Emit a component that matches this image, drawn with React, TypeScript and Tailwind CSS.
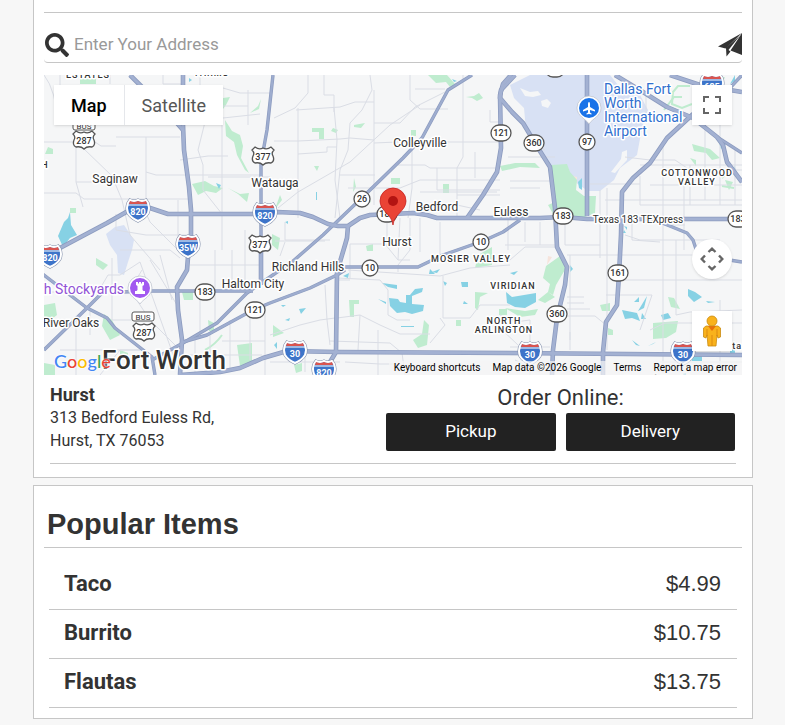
import type { ReactNode } from "react";
import { FaSearch } from "react-icons/fa";

const popularItems = [
  { name: "Taco", price: "$4.99" },
  { name: "Burrito", price: "$10.75" },
  { name: "Flautas", price: "$13.75" }
];

const highways = [
  "M44 256 L60 248 L107 223 L128 211 L140 207 L150 208 L168 214 L253 214 L277 212 L300 213 L313 217 L328 224 L338 226 L348 226 L360 218 L370 215 L413 213 L427 215 L437 218 L540 218 L563 217 L587 219 L742 219",
  "M183 75 L183 125 L184 150 L189 187 L191 210 L191 237 L188 257 L187 270 L177 287 L178 310 L182 340 L180 375",
  "M130 75 L140 85 L176 122 L183 130",
  "M587 75 V216",
  "M511 75 L503 84 L500 95 L501 148 L497 172 L483 195 L467 218",
  "M515 75 L501 90 L500 98 L512 112 L523 123 L538 148 L550 167 L555 208 L557 247 L567 267 L565 285 L557 318 L553 350 L552 375",
  "M702 108 L692 115 L667 138 L650 163 L633 178 L622 192 L621 235 L619 275 L617 305 L606 322 L603 352 L603 375",
  "M615 75 L643 92 L667 107 L693 118 L717 137 L723 145 L727 162 L742 182",
  "M348 226 L347 238 L345 245 L337 272 L336 352 L330 362 L322 375",
  "M180 375 L220 372 L240 368 L263 358 L287 351 L337 352 L510 353 L742 355",
  "M261 247 L261 285",
  "M670 75 L700 85 L730 90 L742 92"
];

const arterials = [
  "M273 75 L267 130 L261 163 L261 250",
  "M472 75 L448 90 L422 138 L403 158 L370 190 L323 235 L292 262 L280 270 L247 293 L217 323 L183 343 L152 360",
  "M345 270 L337 275 L310 288 L270 303 L253 310 L207 335 L183 342",
  "M340 267 H418 L443 255 L483 241 L503 232 L520 220",
  "M660 222 L687 233 L693 240 L698 255 L717 258 L742 262",
  "M717 137 L742 153",
  "M728 90 L742 75",
  "M122 292 L150 291 L253 291",
  "M40 272 L87 308 L107 318 L115 328 L152 357 L155 375",
  "M102 293 L87 308 L44 350"
];

const streets = [
  "M44 142 H78 M76 115 V182 L83 207 M83 148 L112 176 L122 200 L130 235 L160 270 M76 182 H120 M44 193 H76 L84 199 H190 M116 137 H180 M92 140 L101 146 H116 M146 137 V200 M146 172 L156 175 H261",
  "M180 160 L208 156 H228 M205 122 L198 150 L203 165 V190 L222 214 M222 125 V250 M208 177 H270 M178 200 V250 M116 214 V230 L146 235 H190 M140 200 L150 222 L178 250 M120 250 H170 L180 258",
  "M44 75 Q56 90 58 125 M60 85 V75 M110 75 V84 M163 75 V84 H183 M223 106 H248 M223 88 L240 93 H270 M248 90 V125 M223 118 L260 114 M200 75 V86",
  "M274 118 L295 108 L308 93 V75 M324 75 V95 H334 V112 M296 110 L340 107 L355 102 H374 M298 108 V218 M334 108 L337 140 L335 180 L340 218 M274 141 H298 L340 139 L350 138 L374 140 M298 154 L327 152 V147 L337 147",
  "M370 75 L372 90 L362 110 L350 123 L348 150 L340 170 L335 218 M374 90 V205 M374 123 H400 L415 107 L445 92 M374 143 L397 142 H500 M410 75 V100 L420 109 H448 M415 89 H445 M463 75 V157 L457 168 V218",
  "M278 208 L298 192 L350 162 L390 125 L420 105 M340 175 H375 M348 188 H400 L420 180 H500 M412 150 V188 L408 218 M398 165 L425 165 L430 168 H497 M437 168 V190 H500 M475 152 V178 M490 110 V122 H500 M457 195 H500",
  "M420 192 H497 M387 188 V245 M400 218 L398 260 M420 218 V252 M440 222 V255 M457 205 L480 210 M285 222 V240 H330 M275 241 H325 M285 242 L280 256 M350 244 V278 M350 244 H385 L398 260 H410",
  "M337 278 L380 280 L388 290 V315 L397 320 H410 M410 218 V250 L398 265 V272 M348 270 L440 276 L470 268 L510 265 M443 276 V318 H470 L480 305 H510 M430 343 L445 325 L440 318 M337 318 L360 315 L380 325 L400 334 H430",
  "M270 335 L300 325 L320 320 L335 318 M325 285 L327 320 L330 345 M330 341 L390 343 L402 353 L405 375 M360 315 L358 350 M378 330 V375 M337 300 V280 H350 M270 362 H340 M305 355 V372 M345 362 L380 364 H395",
  "M510 181 H550 M510 188 H540 M508 157 H555 M525 122 L530 140 L545 150 M508 220 V250 M525 222 V242 M540 222 V245 M505 245 H558 M500 258 L510 260 L525 247 H558 M565 225 V245 H600 M570 255 V340",
  "M590 184 H640 M607 188 V350 M640 176 V205 H742 M646 90 V120 M663 146 V375 M684 175 V250 M605 200 H640 L742 200 M640 165 H742 M650 185 H742 M625 157 L650 160 H675 L690 170 H742 M690 165 V205 M705 120 V200 M720 120 V205 M735 150 V205",
  "M567 255 H720 M600 190 V258 M620 280 H742 M625 235 L640 240 H720 M632 222 V240 L660 242 M606 295 H652 L640 330 M650 330 L665 323 H742 M663 225 H685 M676 240 V315 L690 312 L742 310 M660 362 H742 M700 325 V350 M720 300 V375",
  "M567 297 H584 M567 303 H584 M567 309 H590 M567 316 H595 L606 325 M570 332 V350 M530 320 V375 M500 315 L515 322 L530 320 M500 328 L518 345 M510 347 H550 M515 360 L540 372",
  "M44 292 H98 L108 275 H120 L140 262 M112 258 V320 H142 M140 262 L175 360 M150 260 L180 310 M160 255 L172 300 M44 322 H60 M60 350 H142 M76 320 V375 M90 310 V335 M142 270 L130 290 L150 320 L175 345",
  "M190 265 H261 M215 250 V291 M232 250 V291 M245 230 V291 M200 291 V335 M215 291 V325 M230 320 V372 M222 341 H265 M185 355 H262 M250 310 V360 M265 305 V375 M195 340 V375 M210 335 V375 M100 375 L120 350 L140 350"
];

const parks = [
  "M225 120 L232 131 L240 135 L243 146 L241 158 L249 173 L245 170 L237 155 L234 142 L226 136Z",
  "M192 184 L205 181 L214 186 L223 188 L216 193 L206 191 L198 195Z",
  "M228 188 L240 194 L249 193 L247 202 L238 194Z",
  "M70 208 h6 v5 h-6z M48 147 l5 2 v5 h-8z M80 79 h16 v5 h-16z",
  "M223 98 L230 97 L226 105 L223 109Z M261 99 L259 109 L250 113 L258 106Z",
  "M312 128 H324 V139 H319 V132 H312Z M333 128 L338 130 L336 133 L331 131Z M354 125 L365 123 L361 128 L354 127Z",
  "M428 75 H447 L455 84 L450 87 L446 82 L436 83Z M466 97 L474 96 L479 93 L483 98 L477 101 L472 98Z M411 130 h5 v6 h-5z M391 178 h9 v6 h-9z M443 184 h6 v9 h-6z M314 166 h5 l-2 5z",
  "M354 178 L356 187 L353 192Z M280 195 L282 200 L275 209Z M367 197 l4 6 l-2 -7z",
  "M551 165 L567 164 L570 172 L577 180 L576 190 L584 196 H596 L595 213 L580 219 H556 L548 205 L555 202Z",
  "M500 166 L515 163 H535 L540 168 L520 167 L502 171Z",
  "M546 266 L560 256 L566 268 L556 285 L553 295 L548 292 L550 284 L543 278Z M538 300 L548 292 L555 297 L545 303Z",
  "M505 308 L525 311 L538 309 L535 315 L520 317Z M600 305 l10 -2 v8 h-8z M608 328 l5 2 v5 h-5z",
  "M653 323 L678 321 L676 332 L666 338 L653 339Z M668 297 L674 298 L680 309 L671 307Z",
  "M424 320 L429 325 L427 345 L418 348 L413 340 L422 334Z M349 300 H359 V304 H354 V317 H350Z M366 246 l7 -2 v7 h-6z",
  "M475 292 L488 293 L480 297 L478 310 L475 308Z M478 255 L492 247 V265 L475 268Z M456 320 h5 v6 h-5z M499 309 h8 v6 h-8z",
  "M44 305 L55 303 L57 315 L48 322 L44 320Z M96 258 L108 265 L103 270 L96 265Z M104 314 L112 320 L120 335 L110 340 L102 326Z M182 292 H193 V300 H184Z",
  "M237 345 L252 343 V362 L240 366Z M44 375 V363 L55 365 V375Z M273 325 L284 333 L273 337Z M272 234 L280 238 L278 250 L272 245Z M294 365 l8 -2 v8 l-6 2z M120 350 l8 3 v7 l-8 -2z M208 320 l6 3 v8 h-5z",
  "M692 144 L710 149 L720 158 L712 160 L706 153 L694 151Z M725 180 l8 2 l-4 8 z M690 158 l6 2 v6z M715 80 l10 -3 l-5 12z"
];

const creeks = [
  "M690 86 H678 L673 92 L672 104 L682 108 L692 104",
  "M664 110 L674 97 L682 97",
  "M722 178 L730 170 L736 176 M722 186 L734 188",
  "M222 335 Q215 345 205 350"
];

const water = [
  "M64 222 L68 218 L70 212 L71 225 L77 235 L70 238 L63 247 L58 236Z",
  "M389 298 L398 299 L400 302 L406 303 V295 L410 295 L415 289 L423 288 L422 292 L412 296 L412 304 L424 305 L423 311 L412 314 L405 312 L397 313 L390 306Z",
  "M382 283 L397 285 L397 289 L388 287Z M343 276 L349 273 L348 278Z M378 299 l8 5 v-2z M461 282 h7 v5 h-6z M464 301 l4 3 h-5z",
  "M430 269 l5 5 h-6z M432 272 l8 -3 l-3 4z M299 309 L306 308 L301 314Z M285 320 l5 -2 l-1 3z M281 305 h5 l-3 2z M443 281 l4 2 l-2 3z",
  "M506 292 L512 297 L536 293 L536 302 L525 308 L515 307 L507 303Z M510 273 l8 -2 l-4 4z M570 265 l3 4 l-3 3z",
  "M622 310 L637 313 L640 321 L632 318 L625 319Z M634 302 l5 -5 v5z M638 311 l9 -15 l-3 12z M661 315 l7 -2 l3 5 l-8 2z M642 313 l4 6 h-5z",
  "M688 289 L695 292 L702 297 L694 302 L688 296Z M706 301 l9 1 l-7 1z M632 340 l8 6 l-4 -1z M648 346 l8 -4 l-3 2z M690 355 h12 v6 h-10z M679 375 l7 -2 v2z",
  "M578 182 L582 178 V190 L579 188Z M316 192 h1 v8 h-1z M624 230 l2 3 h-3z M624 226 l3 1 v3z M735 75 l-5 9 l5 -3z M718 140 l8 4 l-5 5z M734 165 l3 8 l-2 -1z",
  "M190 213 l12 -4 M216 183 l5 2 l-2 4z M285 222 l3 -1 v3z M189 78 l3 2 l-3 2z M452 79 l5 2 l-3 1z M274 345 l3 -3 v7z M401 326 l13 0 v1 h-13z",
  "M712 328 l5 3 v12 l-5 -4z M730 345 l5 2 v6 h-5z"
];

const interstates = [
  { x: 138, y: 210, label: "820" },
  { x: 265, y: 214, label: "820" },
  { x: 188, y: 246, label: "35W" },
  { x: 50, y: 256, label: "820" },
  { x: 295, y: 352, label: "30" },
  { x: 530, y: 353, label: "30" },
  { x: 683, y: 353, label: "30" },
  { x: 324, y: 371, label: "820" },
  { x: 712, y: 85, label: "635" }
];

const usRoutes = [
  { x: 84, y: 140, label: "287" },
  { x: 263, y: 156, label: "377" },
  { x: 260, y: 244, label: "377" },
  { x: 144, y: 332, label: "287" }
];

const stateRoutes = [
  { x: 362, y: 199, label: "26" },
  { x: 387, y: 214, label: "183" },
  { x: 370, y: 268, label: "10" },
  { x: 481, y: 242, label: "10" },
  { x: 501, y: 133, label: "121" },
  { x: 534, y: 143, label: "360" },
  { x: 587, y: 142, label: "97" },
  { x: 563, y: 216, label: "183" },
  { x: 738, y: 219, label: "183" },
  { x: 205, y: 292, label: "183" },
  { x: 255, y: 310, label: "121" },
  { x: 618, y: 273, label: "161" },
  { x: 557, y: 314, label: "360" },
  { x: 555, y: 69, label: "121" }
];

const cities = [
  { x: 115, y: 183, label: "Saginaw" },
  { x: 275, y: 187, label: "Watauga" },
  { x: 420, y: 147, label: "Colleyville" },
  { x: 437, y: 211, label: "Bedford" },
  { x: 511, y: 216, label: "Euless" },
  { x: 397, y: 246, label: "Hurst" },
  { x: 308, y: 271, label: "Richland Hills" },
  { x: 253, y: 288, label: "Haltom City" },
  { x: 71, y: 327, label: "River Oaks" }
];

const districts = [
  { x: 88, y: 78, label: "ESTATES" },
  { x: 212, y: 76, label: "FARMS" },
  { x: 45, y: 168, label: "H" },
  { x: 471, y: 262, label: "MOSIER VALLEY" },
  { x: 513, y: 289, label: "VIRIDIAN" },
  { x: 504, y: 324, label: "NORTH" },
  { x: 504, y: 333, label: "ARLINGTON" },
  { x: 697, y: 176, label: "COTTONWOOD" },
  { x: 697, y: 185, label: "VALLEY" }
];

function InterstateShield({ x, y, label }: { x: number; y: number; label: string }) {
  return (
    <g transform={`translate(${x} ${y})`}>
      <path
        d="M-8 -10 Q-4 -8 0 -10 Q4 -8 8 -10 L10 -7 Q12 -2 10 3 Q7 8 0 11 Q-7 8 -10 3 Q-12 -2 -10 -7Z"
        className="fill-[#3d74c9] stroke-[#7e8ca8]"
        strokeWidth="3"
      />
      <path
        d="M-8 -10 Q-4 -8 0 -10 Q4 -8 8 -10 L10 -7 Q12 -2 10 3 Q7 8 0 11 Q-7 8 -10 3 Q-12 -2 -10 -7Z"
        className="fill-[#3d74c9] stroke-white"
        strokeWidth="2"
      />
      <path d="M-8 -9 Q-4 -7 0 -9 Q4 -7 8 -9 L9 -6 H-9Z" className="fill-[#d9544f]" />
      <path d="M-10 -5 H10" className="stroke-white" strokeWidth="1" />
      <text y="5" textAnchor="middle" className="fill-white text-[9px] font-bold">
        {label}
      </text>
    </g>
  );
}

function UsShield({ x, y, label }: { x: number; y: number; label: string }) {
  return (
    <g transform={`translate(${x} ${y})`}>
      <path
        d="M-8 -9 Q-4 -6 0 -8 Q4 -6 8 -9 L11 -6 Q8 -3 10 0 Q12 5 8 7 Q3 6 0 9 Q-3 6 -8 7 Q-12 5 -10 0 Q-8 -3 -11 -6Z"
        className="fill-white stroke-[#555]"
        strokeWidth="1.3"
      />
      <text y="4" textAnchor="middle" className="fill-[#333] text-[9px] font-medium">
        {label}
      </text>
    </g>
  );
}

function StateShield({ x, y, label }: { x: number; y: number; label: string }) {
  const half = label.length > 2 ? 10 : 8;

  return (
    <g transform={`translate(${x} ${y})`}>
      <rect
        x={-half}
        y="-8"
        width={half * 2}
        height="16"
        rx="8"
        className="fill-white stroke-[#555]"
        strokeWidth="1.3"
      />
      <text y="3" textAnchor="middle" className="fill-[#333] text-[9px] font-medium">
        {label}
      </text>
    </g>
  );
}

function BusPlate({ x, y }: { x: number; y: number }) {
  return (
    <g transform={`translate(${x} ${y})`}>
      <rect x="-11" y="-5" width="22" height="9" rx="2" className="fill-white stroke-[#555]" />
      <text y="3" textAnchor="middle" className="fill-[#333] text-[8px]">
        BUS
      </text>
    </g>
  );
}

function PlacePin({ x, y, color, children }: { x: number; y: number; color: string; children: ReactNode }) {
  return (
    <g transform={`translate(${x} ${y})`}>
      <path
        d="M0 16 C-3 11 -12 8 -12 0 A12 12 0 0 1 12 0 C12 8 3 11 0 16Z"
        className="fill-white stroke-[#b9bfca]"
        strokeWidth="0.7"
      />
      <circle r="10" fill={color} />
      {children}
    </g>
  );
}

function MapCanvas() {
  return (
    <svg
      viewBox="44 75 698 300"
      preserveAspectRatio="xMidYMid slice"
      className="block h-[300px] w-full bg-[#f5f6f7]"
      role="img"
      aria-label="Map"
    >
      <path
        d="M510 85 L530 75 H610 L622 90 L640 95 L648 110 L642 128 L637 155 L620 168 L614 180 L600 191 H588 L572 180 L566 166 L551 165 L538 148 L526 130 L524 108 L514 98Z"
        className="fill-[#d8e1f4]"
      />
      <path d="M106 234 L115 227 L124 225 L134 240 L132 250 L128 262 L124 275 L118 273 L117 255 L110 245Z" className="fill-[#d8e1f4]" />
      <path d="M541 101 l6 -2 l4 4 l-3 5 l-6 -2z M622 152 l5 -2 v10 l-12 13 l-4 -1 l10 -13z M520 88 l10 4 l8 -1 l3 4 l-8 2 l-8 -1z" className="fill-[#f5f6f7]" />
      <path d="M569 175 l8 2 v6 l-5 -2z M548 256 l4 1 l-5 8 z" className="fill-[#f6e4dc]" />
      <g className="fill-[#bfeccf]">
        {parks.map((d) => (
          <path key={d} d={d} />
        ))}
      </g>
      <g fill="none" className="stroke-[#bfeccf]" strokeWidth="2">
        {creeks.map((d) => (
          <path key={d} d={d} />
        ))}
      </g>
      <g className="fill-[#86d1e4]">
        {water.map((d) => (
          <path key={d} d={d} />
        ))}
      </g>
      <g fill="none" className="stroke-[#dadde5]" strokeWidth="1">
        {streets.map((d) => (
          <path key={d} d={d} />
        ))}
      </g>
      <g fill="none" strokeLinejoin="round">
        {arterials.map((d) => (
          <path key={d} d={d} className="stroke-[#8c9bbf]" strokeWidth="3.4" />
        ))}
        {highways.map((d) => (
          <path key={d} d={d} className="stroke-[#8c9bbf]" strokeWidth="4.6" />
        ))}
        {arterials.map((d) => (
          <path key={d} d={d} className="stroke-[#9eadcf]" strokeWidth="2" />
        ))}
        {highways.map((d) => (
          <path key={d} d={d} className="stroke-[#a3b1d2]" strokeWidth="3" />
        ))}
      </g>

      {interstates.map((s) => (
        <InterstateShield key={`${s.x}-${s.y}`} {...s} />
      ))}
      {usRoutes.map((s) => (
        <UsShield key={`${s.x}-${s.y}`} {...s} />
      ))}
      {stateRoutes.map((s) => (
        <StateShield key={`${s.x}-${s.y}`} {...s} />
      ))}
      <BusPlate x={84} y={126} />
      <BusPlate x={143} y={317} />

      <g textAnchor="middle" className="fill-[#333] stroke-white" strokeWidth="3" paintOrder="stroke" strokeLinejoin="round">
        {cities.map((c) => (
          <text key={c.label} x={c.x} y={c.y} className="text-[12px]">
            {c.label}
          </text>
        ))}
        {districts.map((c) => (
          <text key={c.label} x={c.x} y={c.y} className="text-[9px] font-medium tracking-[1px]">
            {c.label}
          </text>
        ))}
        <text x="638" y="223" className="text-[10px]">
          Texas 183 TEXpress
        </text>
        <text x="164" y="369" className="text-[26px] font-medium">
          Fort Worth
        </text>
        <text x="742" y="349" textAnchor="end" className="text-[9px] font-medium tracking-[1px]">
          Intersta
        </text>
        <text x="660" y="384" className="text-[13px]">
          Grand Prairie
        </text>
      </g>
      <g className="fill-[#2f6fce] stroke-white text-[14px]" strokeWidth="3" paintOrder="stroke" strokeLinejoin="round">
        <text x="604" y="94">Dallas Fort</text>
        <text x="604" y="108">Worth</text>
        <text x="604" y="122">International</text>
        <text x="604" y="136">Airport</text>
      </g>
      <text
        x="124"
        y="294"
        textAnchor="end"
        className="fill-[#9153d6] stroke-white text-[14px]"
        strokeWidth="3"
        paintOrder="stroke"
      >
        Fort Worth Stockyards
      </text>

      <PlacePin x={589} y={108} color="#1a73e8">
        <path
          d="M0 -6 Q1 -6 1 -4 V-1 L6 2 V3.500 L1 2 V4.500 L2.500 5.500 V6.500 L0 6 L-2.500 6.500 V5.500 L-1 4.500 V2 L-6 3.500 V2 L-1 -1 V-4 Q-1 -6 0 -6Z"
          className="fill-white"
        />
      </PlacePin>
      <PlacePin x={140} y={288} color="#a259f0">
        <path
          d="M-4 -6 H-2 V-4.500 H-1 V-6 H1 V-4.500 H2 V-6 H4 V-3 L2.500 -2 V2 L3.500 3 H5 V6 H-5 V3 H-3.500 L-2.500 2 V-2 L-4 -3Z"
          className="fill-white"
        />
      </PlacePin>

      <path
        d="M393 225 C392 214 380 211 380 201 A13 13 0 0 1 406 201 C406 211 394 214 393 225Z"
        className="fill-[#ea4335] stroke-[#c5221f]"
        strokeWidth="0.8"
      />
      <circle cx="393" cy="201" r="5" className="fill-[#b31412]" />
    </svg>
  );
}

function Pegman() {
  return (
    <svg viewBox="0 0 20 32" className="h-8 w-5" aria-hidden="true">
      <path
        d="M4 11 H16 L18.500 13 V22 L16 23 L15 20 L14 31 H6 L5 20 L4 23 L1.500 22 V13Z"
        className="fill-[#f9b21c] stroke-[#c98b12]"
        strokeWidth="0.8"
      />
      <path d="M6 11 H14 L10 16Z" className="fill-[#e8710a]" />
      <path d="M10 20 V31 M5 14 V21 M15 14 V21" className="stroke-[#dd8a10]" strokeWidth="1" />
      <circle cx="10" cy="6" r="5" className="fill-[#f9b21c] stroke-[#c98b12]" strokeWidth="0.8" />
    </svg>
  );
}

function StoreMap() {
  return (
    <div className="relative mt-3 overflow-hidden">
      <MapCanvas />

      <div className="absolute left-[10px] top-[10px] flex h-10 bg-white text-[18px] shadow">
        <button type="button" className="border-r border-gray-200 px-[17px] font-medium text-black">
          Map
        </button>
        <button type="button" className="px-[17px] text-[#565656]">
          Satellite
        </button>
      </div>

      <button
        type="button"
        aria-label="Toggle fullscreen view"
        className="absolute right-[10px] top-[10px] flex size-10 items-center justify-center bg-white shadow"
      >
        <svg viewBox="0 0 18 18" className="size-[18px] fill-[#666]" aria-hidden="true">
          <path d="M0 0 v6 h2 V2 h4 V0z M16 0 h-4 v2 h4 v4 h2 V0z M16 16 h-4 v2 h6 v-6 h-2z M2 12 H0 v6 h6 v-2 H2z" />
        </svg>
      </button>

      <div className="absolute bottom-6 right-[10px] flex flex-col gap-8">
        <button
          type="button"
          aria-label="Map camera controls"
          className="flex size-10 items-center justify-center rounded-full bg-white shadow"
        >
          <svg viewBox="0 0 24 24" className="size-6 fill-none stroke-[#666]" strokeWidth="2.4" aria-hidden="true">
            <path d="M8.500 5 L12 1.700 L15.500 5 M8.500 19 L12 22.300 L15.500 19 M5 8.500 L1.700 12 L5 15.500 M19 8.500 L22.300 12 L19 15.500" />
          </svg>
        </button>
        <button
          type="button"
          aria-label="Street View Pegman Control"
          className="flex size-10 items-center justify-center bg-white shadow"
        >
          <Pegman />
        </button>
      </div>

      <a
        href="#google"
        aria-label="Google"
        className="absolute bottom-0 left-[10px] font-['Lato'] text-[18px] font-medium leading-7 [text-shadow:0_0_2px_white,0_0_2px_white]"
      >
        <span className="text-[#4285f4]">G</span>
        <span className="text-[#ea4335]">o</span>
        <span className="text-[#fbbc04]">o</span>
        <span className="text-[#4285f4]">g</span>
        <span className="text-[#34a853]">l</span>
        <span className="text-[#ea4335]">e</span>
      </a>

      <div className="absolute bottom-0 right-0 flex gap-3 bg-[#f5f5f5]/70 px-[5px] text-[10px] leading-[14px] text-black">
        <button type="button">Keyboard shortcuts</button>
        <span>Map data ©2026 Google</span>
        <a href="#terms">Terms</a>
        <a href="#report">Report a map error</a>
      </div>
    </div>
  );
}

function LocationCard() {
  return (
    <section className="border-x border-b border-[#c6c6c6] bg-white px-[10px] pb-[13px] pt-3">
      <hr className="border-[#c6c6c6]" />
      <form className="flex h-[50px] items-center rounded border-b border-[#c6c6c6] pt-[14px]">
        <label htmlFor="address" className="pl-px text-[#333]">
          <FaSearch className="size-6" />
          <span className="sr-only">Address</span>
        </label>
        <input
          id="address"
          type="text"
          placeholder="Enter Your Address"
          className="min-w-0 flex-1 px-[5px] text-[17px] outline-none placeholder:text-[#999]"
        />
        <button type="button" aria-label="Use my location">
          <svg viewBox="0 0 24 24" className="size-6 fill-[#333]" aria-hidden="true">
            <path d="M0 13.500 L24 0 L7.500 15.500Z M24 0 V22 L12.500 17.500Z M8 15 L22 2.500 L10.500 17 L12.500 18.500 L8.500 23.500Z" />
          </svg>
        </button>
      </form>

      <StoreMap />

      <div className="mx-[6px] flex justify-between border-b border-[#c6c6c6] pb-[11px] pt-2">
        <address className="text-[16px] not-italic leading-[23px]">
          <strong className="block text-[18px] font-bold">Hurst</strong>
          313 Bedford Euless Rd,
          <br />
          Hurst, TX 76053
        </address>
        <div className="w-[51%] pr-px">
          <h2 className="text-center text-[22px] leading-[30px]">Order Online:</h2>
          <div className="flex gap-[10px] text-[17px] text-white">
            <button type="button" className="h-[38px] flex-1 rounded-xs bg-[#222]">
              Pickup
            </button>
            <button type="button" className="h-[38px] flex-1 rounded-xs bg-[#222]">
              Delivery
            </button>
          </div>
        </div>
      </div>
    </section>
  );
}

function PopularItems() {
  return (
    <section className="mt-[7px] border border-[#c6c6c6] bg-white px-[10px] pb-[10px]">
      <h1 className="border-b border-[#c6c6c6] px-[3px] pb-[5px] pt-[20px] font-['Liberation_Sans',sans-serif] text-[29px] font-bold leading-9">
        Popular Items
      </h1>
      <ul className="mx-[5px] pt-[13px]">
        {popularItems.map((item) => (
          <li
            key={item.name}
            className="flex h-[49px] items-center justify-between border-b border-[#c6c6c6] pb-1 pl-[15px] pr-4 text-[22px]"
          >
            <span className="font-bold">{item.name}</span>
            <span className="font-['Liberation_Sans',sans-serif]">{item.price}</span>
          </li>
        ))}
      </ul>
    </section>
  );
}

export default function App() {
  return (
    <div className="min-h-screen bg-[#f7f7f7] pl-[33px] pr-8 font-['Roboto',sans-serif] text-[#333]">
      <main className="mx-auto max-w-[720px]">
        <LocationCard />
        <PopularItems />
      </main>
    </div>
  );
}
